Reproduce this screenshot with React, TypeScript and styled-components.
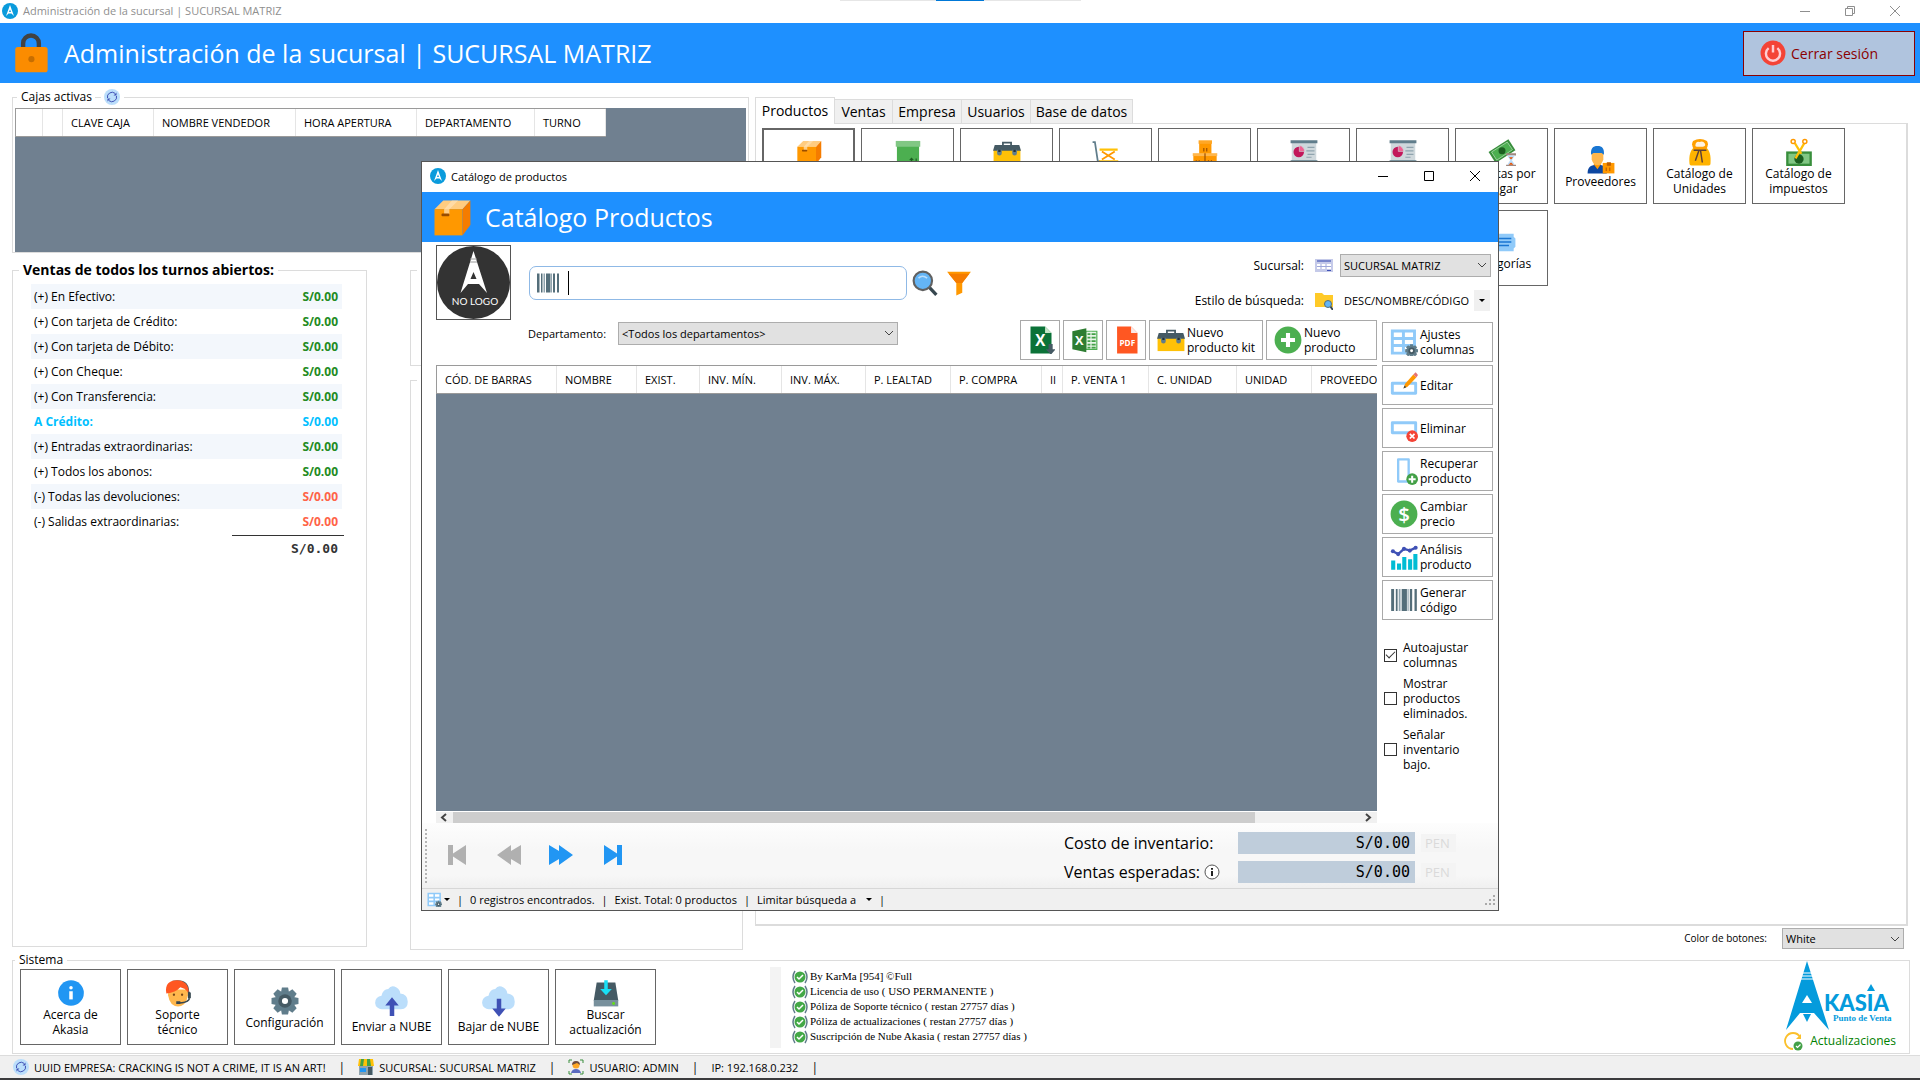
import React from "react";
import styled, { createGlobalStyle, css } from "styled-components";

const GlobalStyle = createGlobalStyle`
  *, *::before, *::after { box-sizing: border-box; }
  body { margin: 0; background: #fff; }
  body, button, input, select { font-family: "Open Sans", "Noto Sans", sans-serif; color: #000; }
  button, input, select, fieldset, legend { margin: 0; padding: 0; }
`;

const blue = "#1e90ff";
const slate = "#708090";
const line = "#dcdcdc";

/* ---------- icons ---------- */

type IconProps = { size?: number };

const Svg = ({ size = 28, children, box = "0 0 48 48" }: IconProps & { children: React.ReactNode; box?: string }) => (
  <svg width={size} height={size} viewBox={box} aria-hidden="true" style={{ display: "block", flex: "none" }}>
    {children}
  </svg>
);

const AkasiaIcon = ({ size = 16 }: IconProps) => (
  <Svg size={size} box="0 0 16 16">
    <circle cx="8" cy="8" r="8" fill="#0a9bdc" />
    <path d="M8 2 12 13 9.500 10.500H6.500L4 13Z" fill="#fff" />
    <path d="M8 6.500 9 9H7Z" fill="#0a9bdc" />
  </Svg>
);

const LockIcon = ({ size = 42 }: IconProps) => (
  <Svg size={size}>
    <path d="M15 20V13a9 9 0 0 1 18 0v7" fill="none" stroke="#424242" strokeWidth="5" />
    <rect x="6" y="17" width="37" height="29" rx="3" fill="#fb8c00" />
    <circle cx="24.500" cy="31" r="3.500" fill="#c76e00" />
  </Svg>
);

const PowerIcon = ({ size = 26 }: IconProps) => (
  <Svg size={size}>
    <circle cx="24" cy="24" r="23" fill="#f44336" />
    <path d="M16 15a13 13 0 1 0 16 0M24 9v14" fill="none" stroke="#ffcdd2" strokeWidth="4.500" />
  </Svg>
);

const RefreshIcon = ({ size = 16 }: IconProps) => (
  <Svg size={size} box="0 0 16 16">
    <circle cx="8" cy="8" r="8" fill="#bbdefb" />
    <path d="M3.500 9A4.700 4.700 0 0 1 11 4.300M12.500 7A4.700 4.700 0 0 1 5 11.700" fill="none" stroke="#3f51b5" />
    <path d="M12.500 3.500v3H9.500ZM3.500 12.500v-3H6.500Z" fill="#3f51b5" />
  </Svg>
);

const BoxIcon = ({ size = 28 }: IconProps) => (
  <Svg size={size}>
    <path d="M4 15 14 5h31L36 15Z" fill="#ffcc80" />
    <path d="M4 15h32v30H4Z" fill="#ff9800" />
    <path d="M36 15 45 5v28L36 45Z" fill="#f57c00" />
    <path d="M24 5h7l-10 10v6h-6v-6Z" fill="#ffe0b2" opacity=".75" />
    <rect x="12" y="20" width="9" height="3" rx="1" fill="#994d00" />
  </Svg>
);

const GreenBoxIcon = () => (
  <Svg>
    <path d="M5 13h38v32H5Z" fill="#4caf50" />
    <path d="M3 5h42v10H3Z" fill="#81c784" />
    <path d="M30 42v-7m-3 3 3-3 3 3M38 42v-7" stroke="#1b5e20" strokeWidth="2" fill="none" />
  </Svg>
);

const ToolboxIcon = () => (
  <Svg>
    <path d="M17 14V8h14v6" fill="none" stroke="#455a64" strokeWidth="3" />
    <rect x="1" y="20" width="46" height="23" fill="#ffc107" />
    <path d="M3 12h42l3 10H0Z" fill="#455a64" />
    <path d="M7 20h8v6a4 4 0 0 1-8 0ZM33 20h8v6a4 4 0 0 1-8 0Z" fill="#607d8b" />
    <path d="M9 20h4v4H9ZM35 20h4v4h-4Z" fill="#263238" />
  </Svg>
);

const CartIcon = () => (
  <Svg>
    <path d="M1 7h4l5 33h4" fill="none" stroke="#607d8b" strokeWidth="3" />
    <path d="M13 18h31v4H13ZM12 38h33v4H12Z" fill="#ffc107" />
    <path d="m17 23 22 14M39 23 17 37" stroke="#ff9800" strokeWidth="3" />
    <circle cx="18" cy="45" r="3" fill="#37474f" /><circle cx="39" cy="45" r="3" fill="#37474f" />
  </Svg>
);

const BoxesIcon = () => (
  <Svg>
    <path d="M14 5h21v23H14Z" fill="#ff9800" /><path d="M13 4h23v6H13Z" fill="#ffa726" />
    <path d="M4 28h40v18H4Z" fill="#ff9800" /><path d="M3 26h42v5H3Z" fill="#ffb74d" />
    <path d="M24 26v20M22 23v-6M27 23v-6M9 44v-6M14 44v-6M30 44v-6M35 44v-6" stroke="#994d00" strokeWidth="2" />
  </Svg>
);

const ChartBoardIcon = () => (
  <Svg>
    <path d="M3 7h42v33H3Z" fill="#cfd8dc" />
    <path d="M1 4h46v5H1ZM1 38h46v4H1ZM22 40h4v8h-4Z" fill="#607d8b" />
    <circle cx="15" cy="24" r="9" fill="#c2185b" />
    <path d="M16 13a10 10 0 0 1 9 10h-9Z" fill="#f06292" stroke="#cfd8dc" />
    <path d="M30 16h12M28 22h14M30 28h12M28 33h9" stroke="#90a4ae" strokeWidth="2" />
  </Svg>
);

const PayableIcon = () => (
  <Svg>
    <path d="m1 24 34-22 12 19L13 43Z" fill="#388e3c" />
    <path d="m6 24 27-17 9 13-27 18Z" fill="#4caf50" stroke="#a5d6a7" strokeWidth="1.500" />
    <circle cx="24" cy="22" r="6" fill="#1b5e20" />
    <path d="M31 26h17v4H31ZM31 46h17v3H31Z" fill="#a1887f" />
    <path d="M33 30h13l-5 8 5 8H33l5-8Z" fill="#bbdefb" />
    <path d="M36 33h7l-3.500 4ZM35 46l4.500-4 4.500 4Z" fill="#e65100" />
  </Svg>
);

const SupplierIcon = () => (
  <Svg>
    <path d="M1 47c0-12 6-15 17-15s16 3 16 15Z" fill="#0d47a1" />
    <path d="M11 31h13l-6 9Z" fill="#ff9800" />
    <path d="M8 12h20v11q-3 10-10 10T8 23Z" fill="#ffb74d" />
    <path d="M7 15C6 4 10 0 18 0s12 4 11 15l-4-3H11Z" fill="#1976d2" />
    <path d="M27 29h20v18H27Z" fill="#ff9800" />
    <path d="M35 29h5v4h-5ZM33 43v-6M39 43v-6" stroke="#bf5f00" strokeWidth="2" fill="#bf5f00" />
  </Svg>
);

const SackIcon = () => (
  <Svg>
    <path d="M14 16h20c7 5 9 15 8 28q0 3-3 3H9q-3 0-3-3c-1-13 1-23 8-28Z" fill="#ffb300" />
    <path d="M12 5q12-7 24 0 4 7-2 15H14Q8 12 12 5Z" fill="#ffa000" />
    <path d="M16 13q1-8 7-6 6-3 9 2 3 5-3 6H19q-3 0-3-2Z" fill="#fff3e0" />
    <path d="M13 21h22M22 22l-6 17M25 22l3 20" stroke="#5d4037" strokeWidth="2.500" fill="none" />
  </Svg>
);

const TaxIcon = () => (
  <Svg>
    <path d="M2 23h44v25H2Z" fill="#388e3c" />
    <path d="M6 27h36v17H6Z" fill="#81c784" />
    <circle cx="24" cy="36" r="8" fill="#1b5e20" />
    <path d="m33 9-15 26M17 9l11 18" stroke="#ffc107" strokeWidth="4" />
    <circle cx="14" cy="6" r="3.500" fill="#fff" stroke="#ff9800" strokeWidth="2.500" />
    <circle cx="34" cy="6" r="3.500" fill="#fff" stroke="#ff9800" strokeWidth="2.500" />
  </Svg>
);

const TagIcon = () => (
  <Svg>
    <path d="M2 10h42v5l3 3v14l-3 3v5H2Z" fill="#90caf9" />
    <path d="M10 18h30M10 24h30M10 30h26" stroke="#1976d2" strokeWidth="2.500" />
  </Svg>
);

const InfoIcon = () => (
  <Svg>
    <circle cx="24" cy="24" r="22" fill="#2196f3" />
    <path d="M21 21h6v14h-6Z" fill="#fff" /><circle cx="24" cy="15" r="3" fill="#fff" />
  </Svg>
);

const SupportIcon = () => (
  <Svg>
    <path d="M14 3c22-4 30 5 29 21h-6V12Z" fill="#455a64" />
    <path d="M7 18h34v10q-3 19-17 19T7 28Z" fill="#ffb74d" />
    <path d="M4 25C1 8 10 2 22 2s22 8 20 22l-6-7-8-3q-8 9-24 11Z" fill="#ff5722" />
    <circle cx="17" cy="27" r="2" fill="#784719" /><circle cx="31" cy="27" r="2" fill="#784719" />
    <path d="M43 22v13q-5 6-18 6" fill="none" stroke="#37474f" strokeWidth="2.500" />
    <path d="M41 23h5v10h-5ZM21 38h7v5h-7Z" fill="#37474f" />
  </Svg>
);

const gearTeeth = [0, 45, 90, 135, 180, 225, 270, 315];
const Gear = ({ x, y, s }: { x: number; y: number; s: number }) => (
  <g transform={`translate(${x} ${y}) scale(${s})`}>
    {gearTeeth.map((a) => <path key={a} d="M-5-22H5L7-12H-7Z" transform={`rotate(${a})`} fill="#607d8b" />)}
    <circle r="16" fill="#607d8b" />
    <circle r="11" fill="#455a64" />
    <circle r="5" fill="#fff" />
  </g>
);

const GearIcon = () => <Svg><Gear x={24} y={24} s={1.05} /></Svg>;

const CloudIcon = ({ up }: { up?: boolean }) => (
  <Svg size={36}>
    <path d="M11 35a9 9 0 0 1-1-18Q12 8 19 8q4-6 11-2 5 3 5 8 10 1 10 11 0 10-9 10Z" fill="#bbdefb" />
    <path d={up ? "M24 19 33 30h-6v14h-6V30h-6Z" : "M24 45 33 34h-6V21h-6v13h-6Z"} fill="#3f51b5" />
  </Svg>
);

const DriveIcon = () => (
  <Svg>
    <path d="M8 6h32l5 31H3Z" fill="#455a64" />
    <path d="M3 36h42v11H3Z" fill="#78909c" />
    <path d="M21 2h6v15h7L24 28 14 17h7Z" fill="#18e0f5" />
    <circle cx="37" cy="42" r="2.500" fill="#64dd17" />
  </Svg>
);

const CheckBadge = ({ size = 16 }: IconProps) => (
  <Svg size={size} box="0 0 16 16">
    <circle cx="8" cy="8" r="5.500" fill="#43a847" />
    <path d="m5 8 2 2 4-4" fill="none" stroke="#fff" strokeWidth="1.500" />
    <path d="M3 2Q-1 8 3 14M13 2q4 6 0 12" fill="none" stroke="#607d8b" strokeWidth="1.500" />
  </Svg>
);

const StoreIcon = () => (
  <Svg size={16} box="0 0 16 16">
    <path d="M1 7h14v9H1Z" fill="#90a4ae" /><path d="M2 9h6v4H2Z" fill="#2196f3" />
    <path d="M10 8h4v8h-4Z" fill="#455a64" />
    <path d="M1 0h14l1 7H0Z" fill="#ffc107" /><path d="M3 0h3L5 7H2ZM9 0h3l1 7H9Z" fill="#43a047" />
  </Svg>
);

const UserIcon = () => (
  <Svg size={16} box="0 0 16 16">
    <path d="M1 4V1h3M12 1h3v3M1 12v3h3M12 15h3v-3" fill="none" stroke="#388e3c" />
    <path d="M3 14q1-4 5-4t5 4Z" fill="#5c6bc0" />
    <circle cx="8" cy="6" r="3.500" fill="#ffa726" /><path d="M4 6q0-4 4-4t4 4L9 4Z" fill="#6d4c41" />
  </Svg>
);

const UpdateIcon = () => (
  <Svg size={20} box="0 0 20 20">
    <path d="M10 18A8 8 0 1 1 17 6" fill="none" stroke="#fbc02d" strokeWidth="1.800" />
    <path d="M18 3v5h-5Z" fill="#fbc02d" />
    <circle cx="15" cy="15" r="4.500" fill="#43a047" />
    <path d="m13 15 1.500 1.500 3-3" fill="none" stroke="#fff" strokeWidth="1.200" />
  </Svg>
);

const AkasiaLogo = () => (
  <svg width="108" height="70" viewBox="0 0 108 70" role="img" aria-label="Akasia Punto de Venta">
    <path d="M21 0 43 69 28 52H14L0 69Z" fill="#049bdc" />
    <path d="M15 12h12M15 15h13M14 18h15" stroke="#fff" />
    <path d="m21 34 5 8H16ZM21 61l-5-9h10Z" fill="#fff" />
    <path d="m21 61-4-8h8Z" fill="#049bdc" />
    <text x="38" y="50" fontFamily="Lato, sans-serif" fontWeight="900" fontSize="22" fill="#049bdc">KASIA</text>
    <path d="m85 23 4 7h-8Z" fill="#049bdc" />
    <text x="47" y="60" fontFamily="Liberation Serif, serif" fontWeight="700" fontSize="9" fill="#049bdc">Punto de Venta</text>
  </svg>
);

const NoLogo = () => (
  <svg width="73" height="73" viewBox="0 0 73 73" role="img" aria-label="No logo">
    <circle cx="36.500" cy="36.500" r="36.500" fill="#333" />
    <path d="M36.500 5 50 47 42 38H31L23.500 47Z" fill="#fff" />
    <path d="M33 13h7M33 16h7" stroke="#999" />
    <path d="m36.500 26 3 7h-6ZM36.500 43l-3-5h6Z" fill="#333" />
    <text x="38" y="59" textAnchor="middle" fontFamily="Lato, sans-serif" fontSize="10" fill="#fff">NO LOGO</text>
  </svg>
);

const BarcodeIcon = ({ size = 28 }: IconProps) => (
  <Svg size={size}>
    <path d="M2 8h5v38H2ZM10 8h3v38h-3ZM20 8h9v38h-9ZM34 8h4v38h-4ZM42 8h4v38h-4Z" fill="#546e7a" transform="translate(0 -3)" />
    <path d="M15 5h3v38h-3ZM30 5h2v38h-2Z" fill="#90a4ae" />
  </Svg>
);

const SearchIcon = () => (
  <Svg size={26}>
    <path d="m32 32 13 14" stroke="#37474f" strokeWidth="6" />
    <circle cx="20" cy="20" r="17" fill="#64b5f6" stroke="#616161" strokeWidth="4" />
    <path d="M12 15q7-7 16 0" fill="none" stroke="#bbdefb" strokeWidth="3" />
  </Svg>
);

const FilterIcon = () => (
  <Svg size={26}>
    <path d="M2 3h44L30 24v18l-11 5V24Z" fill="#ff9800" />
    <path d="M5 7h38L30 24H19Z" fill="#f57c00" />
  </Svg>
);

const BranchIcon = () => (
  <Svg size={18} box="0 0 18 18">
    <path d="M0 2h18v13H0Z" fill="#c5cae9" /><path d="M2 3h14v2H2Z" fill="#7986cb" />
    <path d="M2 7h14v5H2Z" fill="#fff" /><path d="M2 9.500h14M6 7v5M11 7v5" stroke="#9fa8da" />
    <path d="M12 13.500h4" stroke="#3f51b5" />
  </Svg>
);

const FolderSearchIcon = () => (
  <Svg size={18} box="0 0 18 18">
    <path d="M0 1h7l2 2h9v12H0Z" fill="#ffca28" />
    <path d="m15 14 3 4" stroke="#37474f" strokeWidth="2" />
    <circle cx="13" cy="12" r="3.500" fill="#64b5f6" stroke="#546e7a" />
  </Svg>
);

const ExcelDownIcon = () => (
  <Svg>
    <path d="M6 1h25l11 11v35H6Z" fill="#0b7238" /><path d="m31 1 11 11H31Z" fill="#c8e6c9" />
    <text x="23" y="34" textAnchor="middle" fontSize="26" fontWeight="700" fontFamily="Open Sans, sans-serif" fill="#fff">X</text>
    <path d="M37 31h7v9h5l-8 9-9-9h5Z" fill="#455a64" />
  </Svg>
);

const ExcelIcon = () => (
  <Svg>
    <path d="M27 9h19v31H27Z" fill="#e8f5e9" stroke="#4caf50" strokeWidth="2" />
    <path d="M30 14h14M30 20h14M30 26h14M30 32h14M30 37h14" stroke="#43a047" strokeWidth="3" />
    <path d="M36 10v29" stroke="#e8f5e9" strokeWidth="2" />
    <path d="M4 9 28 4v41L4 40Z" fill="#2e7d32" />
    <text x="16" y="32" textAnchor="middle" fontSize="22" fontWeight="700" fontFamily="Open Sans, sans-serif" fill="#fff">X</text>
  </Svg>
);

const PdfIcon = () => (
  <Svg>
    <path d="M7 1h24l11 11v35H7Z" fill="#ff5722" /><path d="m31 1 11 11H31Z" fill="#fbe9e7" />
    <text x="24.500" y="34" textAnchor="middle" fontSize="14" fontWeight="700" fontFamily="Open Sans, sans-serif" fill="#fff">PDF</text>
  </Svg>
);

const PlusIcon = () => (
  <Svg><circle cx="24" cy="24" r="23" fill="#4caf50" /><path d="M24 12v24M12 24h24" stroke="#fff" strokeWidth="7" /></Svg>
);

const GridGearIcon = ({ size = 28 }: IconProps) => (
  <Svg size={size}>
    <path d="M4 5h38v38H4Z" fill="#fff" stroke="#90caf9" strokeWidth="5" />
    <path d="M4 18h38M4 30h38M23 5v38" stroke="#90caf9" strokeWidth="5" />
    <Gear x={37} y={39} s={0.5} />
  </Svg>
);

const EditIcon = () => (
  <Svg>
    <path d="M4 21h40v17H4Z" fill="#fff" stroke="#90caf9" strokeWidth="5" strokeLinejoin="round" />
    <path d="m23 30 3-8L40 6l5 5-15 16Z" fill="#ff9800" /><path d="m40 6 4-4 4 5-3 4Z" fill="#e57373" />
    <path d="m23 30 2-5 3 3Z" fill="#37474f" />
  </Svg>
);

const DeleteIcon = () => (
  <Svg>
    <path d="M4 15h40v17H4Z" fill="#fff" stroke="#90caf9" strokeWidth="5" strokeLinejoin="round" />
    <circle cx="38" cy="38" r="10" fill="#f44336" /><path d="m34 34 8 8m0-8-8 8" stroke="#fff" strokeWidth="3" />
  </Svg>
);

const RestoreIcon = () => (
  <Svg>
    <path d="M14 4h18v38H14Z" fill="#fff" stroke="#90caf9" strokeWidth="4" strokeLinejoin="round" />
    <circle cx="38" cy="38" r="10" fill="#43a047" /><path d="M38 32v12M32 38h12" stroke="#fff" strokeWidth="3.500" />
  </Svg>
);

const PriceIcon = () => (
  <Svg>
    <circle cx="24" cy="24" r="23" fill="#4caf50" />
    <text x="24" y="37" textAnchor="middle" fontSize="35" fontWeight="600" fontFamily="Open Sans, sans-serif" fill="#fff">$</text>
  </Svg>
);

const AnalysisIcon = () => (
  <Svg>
    <path d="M2 30h7v16H2ZM12 35h7v11h-7ZM21 24h7v22h-7ZM31 28h7v18h-7ZM40 19h7v27h-7Z" fill="#00bcd4" />
    <path d="M5 14 14 19 24 10 34 13 44 8" fill="none" stroke="#3f51b5" strokeWidth="4" />
    {[[5, 14], [14, 19], [24, 10], [34, 13], [44, 8]].map(([x, y]) => <circle key={x} cx={x} cy={y} r="3.500" fill="#3f51b5" />)}
  </Svg>
);

const NavIcon = ({ d, off }: { d: string; off?: boolean }) => (
  <Svg size={24} box="0 0 24 24"><path d={d} fill={off ? "#b0b0b0" : "#2196f3"} /></Svg>
);

const ControlIcon = ({ d }: { d: string }) => (
  <Svg size={10} box="0 0 10 10"><path d={d} fill="none" stroke="currentColor" /></Svg>
);
const minimizeGlyph = "M0 5.500h10";
const maximizeGlyph = "M.5.5h9v9h-9Z";
const restoreGlyph = "M.5 2.500h7v7h-7ZM2.500 2.500v-2h7v7h-2";
const closeGlyph = "M0 0 10 10M10 0 0 10";

const CircleInfo = () => (
  <Svg size={16} box="0 0 16 16">
    <circle cx="8" cy="8" r="7" fill="#fff" stroke="#555" /><path d="M8 7v5M8 4v1.800" stroke="#222" strokeWidth="2" />
  </Svg>
);

/* ---------- shared parts ---------- */

const TitleBar = styled.div<{ $inactive?: boolean }>`
  position: relative;
  display: flex;
  align-items: center;
  gap: 5px;
  height: ${(p) => (p.$inactive ? 23 : 30)}px;
  padding: ${(p) => (p.$inactive ? "0 3px 2px 2px" : "0 0 2px 8px")};
  flex: none;
  background: #fff;
  color: ${(p) => (p.$inactive ? "#8f8f8f" : "#000")};
  font-size: 11px;
`;

const WindowControls = styled.div`
  display: flex;
  margin-left: auto;
`;

const ControlButton = styled.button<{ $wide?: boolean }>`
  display: grid;
  place-items: center;
  width: ${(p) => (p.$wide ? 45 : 46)}px;
  height: 18px;
  border: 0;
  background: none;
  color: inherit;
`;

const Banner = styled.header<{ $height: number }>`
  display: flex;
  align-items: center;
  flex: none;
  height: ${(p) => p.$height}px;
  padding: 0 5px 0 ${(p) => (p.$height > 50 ? 10 : 9)}px;
  gap: 12px;
  background: ${blue};
`;

const BannerTitle = styled.h1`
  margin: 0;
  color: #fff;
  font-size: 25px;
  font-weight: 400;
  line-height: 34px;
`;

const LogoutButton = styled.button`
  display: flex;
  align-items: center;
  gap: 5px;
  width: 172px;
  height: 45px;
  margin-left: auto;
  padding-left: 16px;
  border: 1px solid #8b0000;
  background: #b0c4de;
  color: #8b0000;
  font-size: 14px;
`;

const Group = styled.fieldset`
  min-width: 0;
  border: 1px solid ${line};
`;

const Legend = styled.legend<{ $strong?: boolean }>`
  display: flex;
  align-items: center;
  margin-left: ${(p) => (p.$strong ? 6 : 2)}px;
  padding: 0 4px;
  font-size: ${(p) => (p.$strong ? 14 : 12)}px;
  font-weight: ${(p) => (p.$strong ? 700 : 400)};
  line-height: ${(p) => (p.$strong ? 18 : 16)}px;
`;

const LegendDash = styled.span`
  width: 6px;
  height: 1px;
  margin: 0 3px;
  background: ${line};
`;

const BareButton = styled.button`
  display: block;
  border: 0;
  background: none;
`;

const GridArea = styled.div`
  background: ${slate};
  overflow: hidden;
`;

const DataTable = styled.table`
  border-collapse: separate;
  border-spacing: 0;
  table-layout: fixed;
  width: max-content;
  border: 1px solid #9a9a9a;
  border-width: 1px 0 1px 1px;
  background: #fff;
  th {
    height: 27px;
    padding: 0 0 0 8px;
    border-right: 1px solid #e5e5e5;
    font-size: 11px;
    font-weight: 400;
    text-align: left;
    white-space: nowrap;
    overflow: hidden;
  }
`;

const SelectBox = styled.span<{ $width: number; $height: number }>`
  position: relative;
  display: inline-flex;
  width: ${(p) => p.$width}px;
  height: ${(p) => p.$height}px;
  svg { position: absolute; right: 4px; top: 6px; pointer-events: none; }
`;

const NativeSelect = styled.select`
  appearance: none;
  width: 100%;
  padding: 0 18px 0 3px;
  border: 1px solid #adadad;
  border-radius: 0;
  background: #e1e1e1;
  font-size: 11px;
`;

const Dropdown = ({ id, value, width, height = 23 }: { id: string; value: string; width: number; height?: number }) => (
  <SelectBox $width={width} $height={height}>
    <NativeSelect id={id} defaultValue={value}><option>{value}</option></NativeSelect>
    <svg width="10" height="10" viewBox="0 0 10 10" aria-hidden="true"><path d="m1 3 4 4 4-4" fill="none" stroke="#444" /></svg>
  </SelectBox>
);

const FieldLabel = styled.label<{ $size?: number }>`
  font-size: ${(p) => p.$size ?? 12}px;
  line-height: 16px;
  white-space: nowrap;
`;

const Tile = styled.button<{ $width: number; $active?: boolean }>`
  display: flex;
  flex-direction: column;
  align-items: center;
  justify-content: center;
  width: ${(p) => p.$width}px;
  height: 76px;
  padding-top: 2px;
  border: ${(p) => (p.$active ? 2 : 1)}px solid #666;
  background: #fff;
  font-size: 12px;
  line-height: 15px;
  white-space: pre-line;
`;

const TwoLineSpacer = styled.span`
  height: 30px;
`;

const Arrow = styled.span`
  width: 0;
  height: 0;
  border: 3px solid transparent;
  border-top-color: #000;
  border-bottom-width: 0;
`;

/* ---------- main window ---------- */

const Page = styled.div`
  position: relative;
  display: flex;
  flex-direction: column;
  min-height: 100vh;
  background: #fff;
`;

const TopHandle = styled.div`
  position: absolute;
  z-index: 1;
  top: 0;
  left: 50%;
  width: 241px;
  height: 1px;
  margin-left: -120px;
  background: linear-gradient(90deg, #e6e6e6 96px, #0078d7 96px, #0078d7 144px, #e6e6e6 144px);
`;

const Workspace = styled.main`
  display: flex;
  flex: 1;
  gap: 6px;
  padding: 6px 12px 2px;
`;

const LeftSide = styled.div`
  display: flex;
  flex-direction: column;
  flex: none;
  width: 737px;
  gap: 8px;
`;

const CashGroup = styled(Group)`
  height: 164px;
  padding: 3px 2px 0;
`;

const CashGrid = styled(GridArea)`
  height: 144px;
`;

const Summary = styled.div`
  display: flex;
  flex: 1;
  gap: 43px;
`;

const SalesGroup = styled(Group)`
  width: 355px;
  margin-bottom: 3px;
  padding-top: 5px;
`;

const SideGroups = styled.div`
  display: flex;
  flex-direction: column;
  gap: 5px;
  width: 333px;
`;

const SideGroup = styled(Group)<{ $fill?: boolean }>`
  ${(p) => (p.$fill ? css`flex: 1;` : css`height: 105px; flex: none;`)}
  legend { width: 90px; height: 18px; margin-left: 6px; }
`;

const SalesTable = styled.table`
  width: 311px;
  margin-left: 18px;
  border-spacing: 0;
  font-size: 12px;
  line-height: 16px;
  th { font-weight: 400; text-align: left; height: 25px; padding: 0 0 0 3px; }
  td { font-weight: 700; text-align: right; padding: 0 4px 0 0; }
  tr:nth-child(odd) { background: #f3f7fc; }
`;

const SalesRow = styled.tr<{ $color: string; $credit?: boolean }>`
  td { color: ${(p) => p.$color}; }
  ${(p) => p.$credit && css`th { color: ${p.$color}; font-weight: 700; }`}
`;

const Total = styled.output`
  display: block;
  width: 112px;
  margin: 1px 22px 0 auto;
  padding: 4px 6px 0 0;
  border-top: 1px solid #333;
  color: #333;
  font: 700 13px/18px "DejaVu Sans Mono", monospace;
  text-align: right;
`;

const RightSide = styled.div`
  display: flex;
  flex-direction: column;
  flex: 1;
  min-width: 0;
  padding-top: 8px;
`;

const TabList = styled.div`
  display: flex;
  align-items: flex-end;
  height: 27px;
`;

const Tab = styled.button<{ $width: number; $active?: boolean }>`
  width: ${(p) => p.$width}px;
  height: ${(p) => (p.$active ? 27 : 25)}px;
  margin-left: ${(p) => (p.$active ? 0 : -1)}px;
  border: 1px solid ${line};
  border-bottom: ${(p) => (p.$active ? "0" : `1px solid ${line}`)};
  background: ${(p) => (p.$active ? "#fff" : "#f0f0f0")};
  font-size: 14px;
  line-height: 18px;
  white-space: nowrap;
`;

const TabPanel = styled.div`
  flex: 1;
  padding: 4px 6px;
  border: 1px solid ${line};
  border-top: 0;
  border-right-width: 2px;
  border-bottom-width: 2px;
`;

const TabEdge = styled.div`
  height: 1px;
  margin: -1px 0 0 79px;
  background: ${line};
`;

const TileGrid = styled.div`
  display: grid;
  grid-template-columns: repeat(auto-fill, 93px);
  gap: 6px;
`;

const CategoryCell = styled.div`
  grid-column: 8;
`;

const ButtonColor = styled.div`
  display: flex;
  justify-content: flex-end;
  align-items: center;
  gap: 15px;
  height: 24px;
  padding-right: 4px;
`;

const SystemGroup = styled(Group)`
  display: block;
  margin: 0 10px 1px 12px;
  height: 102px;
`;

const SystemRow = styled.div`
  display: flex;
  gap: 6px;
  padding: 1px 13px 0 7px;
`;

const LicenseRail = styled.div`
  width: 11px;
  height: 81px;
  margin: -2px 5px 0 108px;
  background: #f3f3f3;
`;

const LicenseList = styled.ul`
  margin: 0;
  padding: 0;
  list-style: none;
  font: 11px/15px "Liberation Serif", serif;
  li { display: flex; align-items: center; gap: 2px; height: 15px; white-space: nowrap; }
`;

const Brand = styled.div`
  display: flex;
  flex-direction: column;
  align-items: center;
  margin: -8px 0 0 auto;
`;

const UpdateLink = styled.a`
  display: flex;
  align-items: center;
  gap: 7px;
  color: #008000;
  font-size: 12px;
  line-height: 20px;
  text-decoration: none;
`;

const StatusBar = styled.footer`
  display: flex;
  align-items: center;
  gap: 13px;
  height: 25px;
  flex: none;
  padding-left: 13px;
  border-top: 1px solid ${line};
  border-bottom: 2px solid #3b3b3d;
  background: #f0f0f0;
  font-size: 12px;
`;

const StatusItem = styled.span`
  display: inline-flex;
  align-items: center;
  gap: 5px;
  font-size: 11px;
  white-space: nowrap;
`;

/* ---------- product catalogue window ---------- */

const Dialog = styled.section`
  position: absolute;
  top: 161px;
  left: 421px;
  display: flex;
  flex-direction: column;
  width: 1078px;
  height: 750px;
  border: 1px solid #555;
  background: #fff;
`;

const SearchArea = styled.div`
  display: flex;
  align-items: center;
  flex: none;
  padding: 3px 7px 0 14px;
`;

const LogoFrame = styled.div`
  width: 75px;
  height: 75px;
  border: 1px solid #555;
`;

const SearchField = styled.label`
  display: flex;
  align-items: center;
  gap: 8px;
  width: 378px;
  height: 34px;
  margin: 0 5px 0 18px;
  padding: 0 6px;
  border: 1px solid #8fb9e6;
  border-radius: 7px;
`;

const SearchInput = styled.input`
  flex: 1;
  min-width: 0;
  height: 24px;
  border: 0;
  border-left: 1px solid #000;
  outline: 0;
  font-size: 14px;
`;

const SearchActions = styled.div`
  display: flex;
  gap: 8px;
`;

const Options = styled.div`
  display: grid;
  grid-template-columns: auto 25px 151px;
  align-items: center;
  justify-items: start;
  row-gap: 13px;
  margin-left: auto;
  label { margin-right: 11px; justify-self: end; }
`;

const StyleCombo = styled.div`
  display: flex;
  align-items: center;
  gap: 3px;
  width: 150px;
  height: 21px;
  padding-left: 4px;
`;

const StyleInput = styled.input`
  width: 127px;
  border: 0;
  font-size: 11px;
`;

const ComboButton = styled.button`
  display: grid;
  place-items: center;
  width: 16px;
  height: 21px;
  border: 0;
  background: #f0f0f0;
`;

const CatalogArea = styled.div`
  display: flex;
  flex: 1;
  min-height: 0;
  gap: 5px;
  padding: 0 5px 0 14px;
`;

const CatalogMain = styled.div`
  display: flex;
  flex-direction: column;
  flex: 1;
  min-width: 0;
`;

const Toolbar = styled.div`
  display: flex;
  gap: 3px;
  height: 40px;
  margin-bottom: 5px;
  padding-left: 92px;
`;

const DepartmentField = styled.div`
  display: flex;
  align-items: center;
  gap: 12px;
  height: 27px;
  margin-right: auto;
`;

const ToolButton = styled.button<{ $width: number }>`
  display: flex;
  align-items: center;
  gap: 2px;
  width: ${(p) => p.$width}px;
  height: 40px;
  padding-left: ${(p) => (p.$width > 40 ? 7 : 6)}px;
  border: 1px solid #a9a9a9;
  background: #fff;
  font-size: 12px;
  line-height: 15px;
  text-align: left;
  white-space: pre-line;
`;

const ProductGrid = styled(GridArea)`
  flex: 1;
`;

const ScrollTrack = styled.div`
  display: flex;
  align-items: center;
  justify-content: space-between;
  height: 11px;
  margin-top: 1px;
  padding: 0 4px 0 3px;
  background: linear-gradient(90deg, #f0f0f0 17px, #cdcdcd 17px, #cdcdcd 819px, #f0f0f0 819px);
`;

const SideTools = styled.div`
  display: flex;
  flex-direction: column;
  gap: 3px;
  width: 111px;
  padding-top: 2px;
`;

const Checks = styled.div`
  display: flex;
  flex-direction: column;
  gap: 6px;
  padding: 17px 0 0 2px;
`;

const CheckLabel = styled.label`
  display: flex;
  align-items: center;
  gap: 6px;
  font-size: 12px;
  line-height: 15px;
  white-space: pre-line;
`;

const CheckInput = styled.input`
  appearance: none;
  display: grid;
  place-items: center;
  flex: none;
  width: 13px;
  height: 13px;
  border: 1px solid #333;
  background: #fff;
  &:checked::before {
    content: "";
    width: 9px;
    height: 5px;
    margin-top: -3px;
    border: solid #333;
    border-width: 0 0 1px 1px;
    transform: rotate(-45deg);
  }
`;

const NavStrip = styled.div`
  display: flex;
  align-items: center;
  flex: none;
  height: 65px;
  padding: 0 42px 0 3px;
  background: linear-gradient(#fdfdfd, #f7f7f7 40%, #f7f7f7 80%, #f0f0f0);
`;

const Grip = styled.div`
  height: 54px;
  border-left: 2px dotted #b5b5b5;
`;

const NavButtons = styled.div`
  display: flex;
  gap: 28px;
  padding-left: 18px;
`;

const Totals = styled.div`
  display: grid;
  grid-template-columns: 172px 177px 35px;
  gap: 7px 6px;
  align-items: center;
  margin-left: auto;
  padding-top: 4px;
`;

const TotalLabel = styled.label`
  display: flex;
  align-items: center;
  gap: 4px;
  padding-left: 4px;
  margin-right: 14px;
  font-size: 16px;
  line-height: 22px;
  white-space: nowrap;
`;

const TotalValue = styled.input`
  width: 177px;
  height: 22px;
  padding-right: 5px;
  border: 0;
  background: #bfcddb;
  font: 15px "DejaVu Sans Mono", monospace;
  text-align: right;
`;

const Currency = styled.span`
  padding-left: 4px;
  background: #f4f4f4;
  color: #dadada;
  font-size: 13px;
  line-height: 18px;
`;

const DialogStatus = styled.footer`
  display: flex;
  align-items: center;
  gap: 7px;
  flex: none;
  height: 22px;
  padding: 0 1px 0 5px;
  border-top: 1px solid #d7d7d7;
  background: #f0f0f0;
  font-size: 11px;
`;

const StatusMenu = styled.button`
  display: flex;
  align-items: center;
  gap: 2px;
  border: 0;
  background: none;
  font-size: 11px;
`;

const MenuText = styled.span`
  padding-right: 8px;
`;

const Corner = styled.span`
  margin-left: auto;
  align-self: flex-end;
`;

/* ---------- data ---------- */

const cashColumns: [string, number][] = [
  ["", 27], ["", 20], ["CLAVE CAJA", 91], ["NOMBRE VENDEDOR", 142], ["HORA APERTURA", 121], ["DEPARTAMENTO", 118], ["TURNO", 71],
];

const productColumns: [string, number][] = [
  ["CÓD. DE BARRAS", 120], ["NOMBRE", 80], ["EXIST.", 63], ["INV. MÍN.", 82], ["INV. MÁX.", 84], ["P. LEALTAD", 85],
  ["P. COMPRA", 91], ["II", 21], ["P. VENTA 1", 86], ["C. UNIDAD", 88], ["UNIDAD", 75], ["PROVEEDO", 76],
];

const green = "#228b22";
const red = "#ff6347";
const sales: [string, string][] = [
  ["(+) En Efectivo:", green], ["(+) Con tarjeta de Crédito:", green], ["(+) Con tarjeta de Débito:", green],
  ["(+) Con Cheque:", green], ["(+) Con Transferencia:", green], ["A Crédito:", "#00bfff"],
  ["(+) Entradas extraordinarias:", green], ["(+) Todos los abonos:", green],
  ["(-) Todas las devoluciones:", red], ["(-) Salidas extraordinarias:", red],
];

const licenses = [
  "By KarMa [954] ©Full", "Licencia de uso ( USO PERMANENTE )", "Póliza de Soporte técnico ( restan 27757 días )",
  "Póliza de actualizaciones ( restan 27757 días )", "Suscripción de Nube Akasia ( restan 27757 días )",
];

const coveredTiles: [string, React.ReactNode][] = [
  ["Productos", <BoxIcon />], ["Inventario", <GreenBoxIcon />], ["Kits", <ToolboxIcon />], ["Compras", <CartIcon />],
  ["Existencias", <BoxesIcon />], ["Reportes", <ChartBoardIcon />], ["Estadísticas", <ChartBoardIcon />],
];

const productTiles: [string, React.ReactNode][] = [
  ["Cuentas por\npagar", <PayableIcon />], ["Proveedores", <SupplierIcon />],
  ["Catálogo de\nUnidades", <SackIcon />], ["Catálogo de\nimpuestos", <TaxIcon />],
];

const systemTiles: [string, React.ReactNode][] = [
  ["Acerca de\nAkasia", <InfoIcon />], ["Soporte\ntécnico", <SupportIcon />], ["Configuración", <GearIcon />],
  ["Enviar a NUBE", <CloudIcon up />], ["Bajar de NUBE", <CloudIcon />], ["Buscar\nactualización", <DriveIcon />],
];

const sideTools: [string, React.ReactNode][] = [
  ["Ajustes\ncolumnas", <GridGearIcon />], ["Editar", <EditIcon />], ["Eliminar", <DeleteIcon />],
  ["Recuperar\nproducto", <RestoreIcon />], ["Cambiar\nprecio", <PriceIcon />],
  ["Análisis\nproducto", <AnalysisIcon />], ["Generar\ncódigo", <BarcodeIcon />],
];

const HeaderTable = ({ columns }: { columns: [string, number][] }) => (
  <DataTable style={{ width: columns.reduce((sum, c) => sum + c[1], 1) }}>
    <colgroup>{columns.map(([, w], i) => <col key={i} style={{ width: w }} />)}</colgroup>
    <thead><tr>{columns.map(([name], i) => <th key={i} scope="col">{name}</th>)}</tr></thead>
  </DataTable>
);

const Controls = ({ middle, wide }: { middle: string; wide?: boolean }) => (
  <WindowControls>
    <ControlButton $wide={wide} aria-label="Minimizar"><ControlIcon d={minimizeGlyph} /></ControlButton>
    <ControlButton $wide={wide} aria-label="Maximizar"><ControlIcon d={middle} /></ControlButton>
    <ControlButton $wide={wide} aria-label="Cerrar"><ControlIcon d={closeGlyph} /></ControlButton>
  </WindowControls>
);

const CatalogWindow = () => (
  <Dialog role="dialog" aria-label="Catálogo de productos">
    <TitleBar><AkasiaIcon />Catálogo de productos<Controls middle={maximizeGlyph} /></TitleBar>
    <Banner $height={50}><BoxIcon size={42} /><BannerTitle as="h2">Catálogo Productos</BannerTitle></Banner>
    <SearchArea>
      <LogoFrame><NoLogo /></LogoFrame>
      <SearchField>
        <BarcodeIcon size={24} />
        <SearchInput aria-label="Buscar producto" />
      </SearchField>
      <SearchActions>
        <BareButton aria-label="Buscar"><SearchIcon /></BareButton>
        <BareButton aria-label="Filtrar"><FilterIcon /></BareButton>
      </SearchActions>
      <Options>
        <FieldLabel htmlFor="branch">Sucursal:</FieldLabel>
        <BranchIcon />
        <Dropdown id="branch" value="SUCURSAL MATRIZ" width={151} />
        <FieldLabel htmlFor="style">Estilo de búsqueda:</FieldLabel>
        <FolderSearchIcon />
        <StyleCombo>
          <StyleInput id="style" defaultValue="DESC/NOMBRE/CÓDIGO" />
          <ComboButton aria-label="Elegir estilo"><Arrow /></ComboButton>
        </StyleCombo>
      </Options>
    </SearchArea>
    <CatalogArea>
      <CatalogMain>
        <Toolbar>
          <DepartmentField>
            <FieldLabel htmlFor="department" $size={11}>Departamento:</FieldLabel>
            <Dropdown id="department" value="<Todos los departamentos>" width={280} />
          </DepartmentField>
          <ToolButton $width={40} aria-label="Exportar plantilla"><ExcelDownIcon /></ToolButton>
          <ToolButton $width={40} aria-label="Exportar a Excel"><ExcelIcon /></ToolButton>
          <ToolButton $width={40} aria-label="Exportar a PDF"><PdfIcon /></ToolButton>
          <ToolButton $width={114}><ToolboxIcon />{"Nuevo\nproducto kit"}</ToolButton>
          <ToolButton $width={111}><PlusIcon />{"Nuevo\nproducto"}</ToolButton>
        </Toolbar>
        <ProductGrid><HeaderTable columns={productColumns} /></ProductGrid>
        <ScrollTrack>
          <svg width="8" height="9" viewBox="0 0 8 9" aria-hidden="true"><path d="M7 1 3 4.500 7 8" fill="none" stroke="#444" strokeWidth="2" /></svg>
          <svg width="8" height="9" viewBox="0 0 8 9" aria-hidden="true"><path d="m1 1 4 3.500L1 8" fill="none" stroke="#444" strokeWidth="2" /></svg>
        </ScrollTrack>
      </CatalogMain>
      <SideTools>
        {sideTools.map(([name, icon]) => <ToolButton key={name} $width={111}>{icon}{name}</ToolButton>)}
        <Checks>
          <CheckLabel><CheckInput type="checkbox" defaultChecked />{"Autoajustar\ncolumnas"}</CheckLabel>
          <CheckLabel><CheckInput type="checkbox" />{"Mostrar\nproductos\neliminados."}</CheckLabel>
          <CheckLabel><CheckInput type="checkbox" />{"Señalar\ninventario\nbajo."}</CheckLabel>
        </Checks>
      </SideTools>
    </CatalogArea>
    <NavStrip>
      <Grip />
      <NavButtons>
        <BareButton aria-label="Primero" disabled><NavIcon off d="M3 1h5v8.500L21 1v20L8 12.500V21H3Z" /></BareButton>
        <BareButton aria-label="Anterior" disabled><NavIcon off d="M0 11 14 1v6l10-6v20l-10-6v6Z" /></BareButton>
        <BareButton aria-label="Siguiente"><NavIcon d="M24 11 10 1v6L0 1v20l10-6v6Z" /></BareButton>
        <BareButton aria-label="Último"><NavIcon d="M21 1h-5v8.500L3 1v20l13-8.500V21h5Z" /></BareButton>
      </NavButtons>
      <Totals>
        <TotalLabel htmlFor="cost">Costo de inventario:</TotalLabel>
        <TotalValue id="cost" readOnly value="S/0.00" />
        <Currency>PEN</Currency>
        <TotalLabel htmlFor="expected">Ventas esperadas:<CircleInfo /></TotalLabel>
        <TotalValue id="expected" readOnly value="S/0.00" />
        <Currency>PEN</Currency>
      </Totals>
    </NavStrip>
    <DialogStatus>
      <StatusMenu aria-label="Columnas"><GridGearIcon size={15} /><Arrow /></StatusMenu>
      <span>|</span><span>0 registros encontrados.</span><span>|</span>
      <span>Exist. Total: 0 productos</span><span>|</span>
      <StatusMenu><MenuText>Limitar búsqueda a</MenuText><Arrow /></StatusMenu><span>|</span>
      <Corner>
        <svg width="12" height="12" viewBox="0 0 12 12" aria-hidden="true">
          <path d="M8 0h2v2H8ZM4 4h2v2H4ZM8 4h2v2H8ZM0 8h2v2H0ZM4 8h2v2H4ZM8 8h2v2H8Z" fill="#aaa" />
        </svg>
      </Corner>
    </DialogStatus>
  </Dialog>
);

export default function App() {
  return (
    <Page>
      <GlobalStyle />
      <TopHandle />
      <TitleBar $inactive><AkasiaIcon />Administración de la sucursal | SUCURSAL MATRIZ<Controls middle={restoreGlyph} wide /></TitleBar>
      <Banner $height={60}>
        <LockIcon />
        <BannerTitle>Administración de la sucursal | SUCURSAL MATRIZ</BannerTitle>
        <LogoutButton><PowerIcon />Cerrar sesión</LogoutButton>
      </Banner>
      <Workspace>
        <LeftSide>
          <CashGroup>
            <Legend>Cajas activas<LegendDash /><BareButton aria-label="Actualizar"><RefreshIcon /></BareButton></Legend>
            <CashGrid><HeaderTable columns={cashColumns} /></CashGrid>
          </CashGroup>
          <Summary>
            <SalesGroup>
              <Legend $strong>Ventas de todos los turnos abiertos:</Legend>
              <SalesTable>
                <tbody>
                  {sales.map(([name, color]) => (
                    <SalesRow key={name} $color={color} $credit={name === "A Crédito:"}>
                      <th scope="row">{name}</th><td>S/0.00</td>
                    </SalesRow>
                  ))}
                </tbody>
              </SalesTable>
              <Total>S/0.00</Total>
            </SalesGroup>
            <SideGroups>
              <SideGroup><legend /></SideGroup>
              <SideGroup $fill><legend /></SideGroup>
            </SideGroups>
          </Summary>
        </LeftSide>
        <RightSide>
          <TabList role="tablist">
            <Tab role="tab" aria-selected $active $width={80}>Productos</Tab>
            <Tab role="tab" $width={59}>Ventas</Tab>
            <Tab role="tab" $width={70}>Empresa</Tab>
            <Tab role="tab" $width={70}>Usuarios</Tab>
            <Tab role="tab" $width={103}>Base de datos</Tab>
          </TabList>
          <TabEdge />
          <TabPanel role="tabpanel">
            <TileGrid>
              {coveredTiles.map(([name, icon], i) => (
                <Tile key={name} $width={93} $active={i === 0} aria-label={name}>{icon}<TwoLineSpacer /></Tile>
              ))}
              {productTiles.map(([name, icon]) => <Tile key={name} $width={93}>{icon}{name}</Tile>)}
              <CategoryCell><Tile $width={93}><TagIcon />Categorías</Tile></CategoryCell>
            </TileGrid>
          </TabPanel>
          <ButtonColor>
            <FieldLabel htmlFor="button-color" $size={10}>Color de botones:</FieldLabel>
            <Dropdown id="button-color" value="White" width={122} height={21} />
          </ButtonColor>
        </RightSide>
      </Workspace>
      <SystemGroup>
        <Legend>Sistema</Legend>
        <SystemRow>
          {systemTiles.map(([name, icon]) => <Tile key={name} $width={101}>{icon}{name}</Tile>)}
          <LicenseRail />
          <LicenseList>
            {licenses.map((text) => <li key={text}><CheckBadge size={16} />{text}</li>)}
          </LicenseList>
          <Brand>
            <AkasiaLogo />
            <UpdateLink href="#"><UpdateIcon />Actualizaciones</UpdateLink>
          </Brand>
        </SystemRow>
      </SystemGroup>
      <StatusBar>
        <StatusItem><RefreshIcon />UUID EMPRESA: CRACKING IS NOT A CRIME, IT IS AN ART!</StatusItem>
        <span>|</span>
        <StatusItem><StoreIcon />SUCURSAL: SUCURSAL MATRIZ</StatusItem>
        <span>|</span>
        <StatusItem><UserIcon />USUARIO: ADMIN</StatusItem>
        <span>|</span>
        <StatusItem>IP: 192.168.0.232</StatusItem>
        <span>|</span>
      </StatusBar>
      <CatalogWindow />
    </Page>
  );
}
